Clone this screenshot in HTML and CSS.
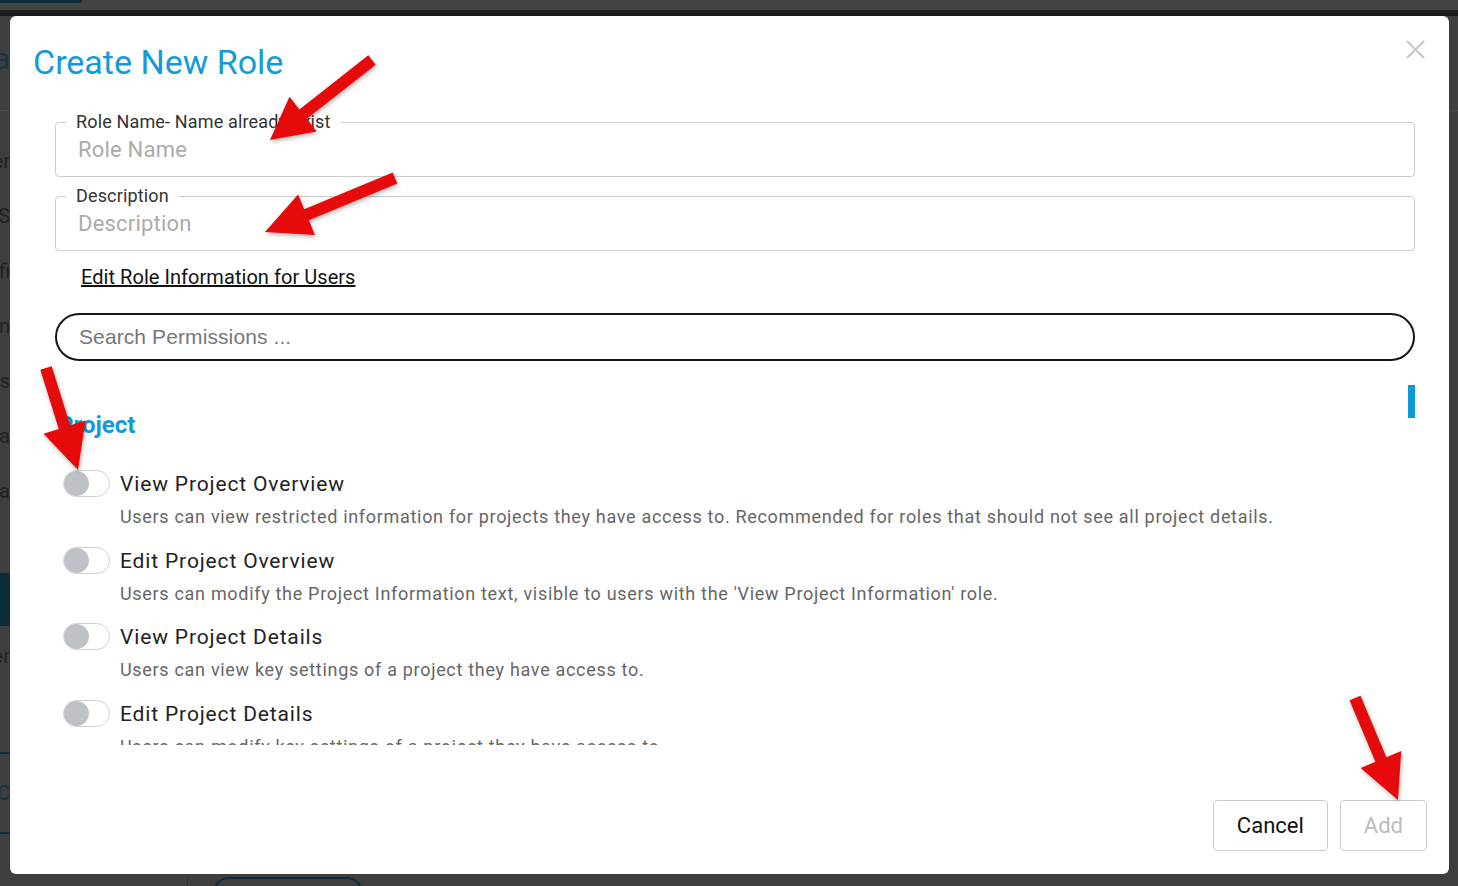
FILE: index.html
```html
<!DOCTYPE html>
<html lang="en">
<head>
    <meta charset="UTF-8">
    <meta name="viewport" content="width=device-width, initial-scale=1.0">
    <title>Create New Role</title>
    <link rel="stylesheet" href="styles.css">
</head>
<body>
    <!-- page behind the dialog (dimmed) -->
    <div class="backdrop">
        <div class="topbar"><span class="topbar-pill"></span></div>
        <div class="topstrip"></div>
        <div class="page-head"><span class="clip page-title">Cra</span></div>
        <div class="page-body">
            <div class="side-nav">
                <div class="side-item"><span class="clip">Tier</span></div>
                <div class="side-item"><span class="clip">S</span></div>
                <div class="side-item"><span class="clip">Profi</span></div>
                <div class="side-item"><span class="clip">Admin</span></div>
                <div class="side-item"><span class="clip">Users</span></div>
                <div class="side-item"><span class="clip">Data</span></div>
                <div class="side-item"><span class="clip">Data</span></div>
                <div class="side-active"></div>
                <div class="side-item"><span class="clip">Other</span></div>
                <div class="side-line"></div>
                <div class="side-item small"><span class="clip teal">C</span></div>
                <div class="side-line last"></div>
            </div>
            <div class="page-main">
                <div class="page-pill"></div>
            </div>
        </div>
    </div>

    <div class="modal">
        <svg class="modal-close" width="19" height="19" viewBox="0 0 19 19">
            <path d="M1 1 L18 18 M18 1 L1 18" stroke="#c8c8c8" stroke-width="2" fill="none"/>
        </svg>
        <h2 class="modal-title">Create New Role</h2>
        <div class="form">
            <fieldset class="field">
                <legend>Role Name- Name already exist</legend>
                <input type="text" placeholder="Role Name">
            </fieldset>
            <fieldset class="field field-2">
                <legend>Description</legend>
                <input type="text" placeholder="Description">
            </fieldset>
            <div class="edit-link"><a href="#">Edit Role Information for Users</a></div>
            <input class="search" type="text" placeholder="Search Permissions ..." autofocus>
            <div class="perm-list">
                <span class="scroll-thumb"></span>
                <h3 class="perm-group">Project</h3>
                <div class="perm first">
                    <span class="toggle"><span class="knob"></span></span>
                    <div>
                        <div class="perm-name">View Project Overview</div>
                        <div class="perm-desc">Users can view restricted information for projects they have access to. Recommended for roles that should not see all project details.</div>
                    </div>
                </div>
                <div class="perm">
                    <span class="toggle"><span class="knob"></span></span>
                    <div>
                        <div class="perm-name">Edit Project Overview</div>
                        <div class="perm-desc">Users can modify the Project Information text, visible to users with the 'View Project Information' role.</div>
                    </div>
                </div>
                <div class="perm">
                    <span class="toggle"><span class="knob"></span></span>
                    <div>
                        <div class="perm-name">View Project Details</div>
                        <div class="perm-desc">Users can view key settings of a project they have access to.</div>
                    </div>
                </div>
                <div class="perm">
                    <span class="toggle"><span class="knob"></span></span>
                    <div>
                        <div class="perm-name">Edit Project Details</div>
                        <div class="perm-desc">Users can modify key settings of a project they have access to.</div>
                    </div>
                </div>
            </div>
        </div>
        <div class="modal-footer">
            <button class="btn">Cancel</button>
            <button class="btn btn-add" disabled>Add</button>
        </div>
    </div>

    <!-- red annotation arrows -->
    <svg class="arrows" width="1458" height="886" viewBox="0 0 1458 886">
        <g fill="#e60a0a">
            <polygon points="375.7,64.7 306.8,118.8 316.7,131.4 270,140 289.5,96.8 299.4,109.4 368.3,55.3"/>
            <polygon points="397.3,183.5 308.8,220.2 314.9,235 265,232 298.1,194.4 304.2,209.2 392.7,172.5"/>
            <polygon points="40.3,369.8 58.8,428.9 43.5,433.7 78,470 85.5,420.5 70.2,425.3 51.7,366.2"/>
            <polygon points="1349.5,700.3 1375.4,761.8 1360.6,768 1398,800 1401.2,751 1386.4,757.2 1360.5,695.7"/>
        </g>
    </svg>
</body>
</html>
```

FILE: styles.css
```css
body {
    margin: 0;
    width: 1458px;
    height: 886px;
    overflow: hidden;
    position: relative;
    background-color: #3e3e3e;
    font-family: Roboto, "Noto Sans", sans-serif;
}

/* dimmed page under the dialog */
.backdrop {
    height: 886px;
}
.topbar {
    height: 10px;
    background-color: #444444;
}
.topbar-pill {
    display: block;
    width: 82px;
    height: 3px;
    background-color: #0e2a3b;
    border-radius: 0 0 8px 0;
}
.topstrip {
    height: 6px;
    background-color: #1c1c1c;
}
.page-head {
    height: 94px;
    border-bottom: 1px solid #4c4c4c;
    display: flex;
    align-items: center;
}
.clip {
    display: flex;
    justify-content: flex-end;
    width: 10px;
    overflow: hidden;
    white-space: nowrap;
    color: #222222;
}
.page-title {
    font-size: 30px;
    color: #163548;
    margin-top: -10px;
}
.page-body {
    display: flex;
}
.side-nav {
    width: 187px;
    border-right: 1px solid #333333;
    padding-top: 22px;
    height: 760px;
}
.side-item {
    height: 55px;
    display: flex;
    align-items: center;
    font-size: 20px;
}
.side-item.small {
    margin-top: 11px;
}
.teal {
    color: #143244;
}
.side-active {
    margin-top: 55px;
    margin-bottom: 2px;
    width: 10px;
    height: 53px;
    background-color: #0b2a3a;
}
.side-line {
    margin-top: 69px;
    width: 10px;
    height: 2px;
    background-color: #0e2d3e;
}
.side-line.last {
    margin-top: 12px;
}
.page-main {
    flex: 1;
    padding: 766px 0 0 25px;
}
.page-pill {
    width: 146px;
    height: 30px;
    border: 2px solid #0d2a3a;
    border-radius: 16px;
}

/* dialog */
.modal {
    position: absolute;
    top: 16px;
    left: 10px;
    width: 1439px;
    height: 858px;
    box-sizing: border-box;
    padding: 25px 22px 23px 23px;
    background: #ffffff;
    border-radius: 6px;
    display: flex;
    flex-direction: column;
}
.modal-close {
    position: absolute;
    top: 24px;
    right: 24px;
}
.modal-title {
    margin: 0;
    font-size: 34px;
    line-height: 42px;
    font-weight: 400;
    color: #149bd7;
}
.form {
    margin: 29px 12px 0 22px;
}
.field {
    margin: 0;
    padding: 0 10px 14px 10px;
    border: 1px solid #cccccc;
    border-radius: 4px;
}
.field legend {
    padding: 0 10px;
    font-size: 18px;
    line-height: 20px;
    color: #333333;
    letter-spacing: 0.15px;
}
.field input {
    display: block;
    width: 100%;
    box-sizing: border-box;
    margin-top: 4px;
    height: 26px;
    padding: 0 0 0 12px;
    border: none;
    outline: none;
    font-family: Roboto, sans-serif;
    font-size: 22px;
    letter-spacing: 0.2px;
}
.field input::placeholder {
    color: #ababab;
}
.field-2 {
    margin-top: 9px;
}
.edit-link {
    margin-top: 14px;
    padding-left: 26px;
    font-size: 20px;
    line-height: 24px;
    letter-spacing: 0.05px;
}
.edit-link a {
    color: #111111;
    text-decoration: underline;
}
.search {
    display: block;
    margin-top: 24px;
    width: 100%;
    height: 48px;
    box-sizing: border-box;
    border: 2px solid #161616;
    border-radius: 24px;
    padding: 0 20px 0 22px;
    outline: none;
    caret-color: #000000;
    font-family: "Liberation Sans", Arial, sans-serif;
    font-size: 21px;
    letter-spacing: 0.1px;
    color: #222222;
}
.search::placeholder {
    color: #777777;
}
.perm-list {
    position: relative;
    margin-top: 9px;
    height: 375px;
    overflow: hidden;
}
.scroll-thumb {
    position: absolute;
    top: 15px;
    right: 0;
    width: 7px;
    height: 33px;
    background-color: #0e9ad8;
}
.perm-group {
    margin: 0;
    padding: 40px 0 0 3px;
    font-size: 24px;
    line-height: 30px;
    font-weight: 700;
    color: #149bd7;
}
.perm {
    display: flex;
    gap: 10px;
    padding: 0 0 15.5px 8px;
}
.perm.first {
    margin-top: 29px;
}
.toggle {
    flex: none;
    display: flex;
    align-items: center;
    width: 47px;
    height: 27px;
    margin-top: 1px;
    box-sizing: border-box;
    border: 1px solid #cfcfcf;
    border-radius: 14px;
    background: #ffffff;
}
.knob {
    width: 25px;
    height: 25px;
    border-radius: 50%;
    background-color: #bec2c7;
}
.perm-name {
    font-size: 21px;
    line-height: 30px;
    letter-spacing: 0.85px;
    color: #222222;
}
.perm-desc {
    margin-top: 5px;
    font-size: 18px;
    line-height: 26px;
    letter-spacing: 0.69px;
    color: #666666;
}
.modal-footer {
    margin-top: auto;
    display: flex;
    justify-content: flex-end;
    gap: 12px;
}
.btn {
    height: 51px;
    padding: 0 23px;
    border: 1px solid #cccccc;
    border-radius: 4px;
    background: #ffffff;
    font-family: Roboto, sans-serif;
    font-size: 22px;
    color: #111111;
}
.btn-add {
    color: #bbbbbb;
}

.arrows {
    position: absolute;
    top: 0;
    left: 0;
    pointer-events: none;
    filter: drop-shadow(1px 2px 2px rgba(0, 0, 0, 0.3));
}
```
